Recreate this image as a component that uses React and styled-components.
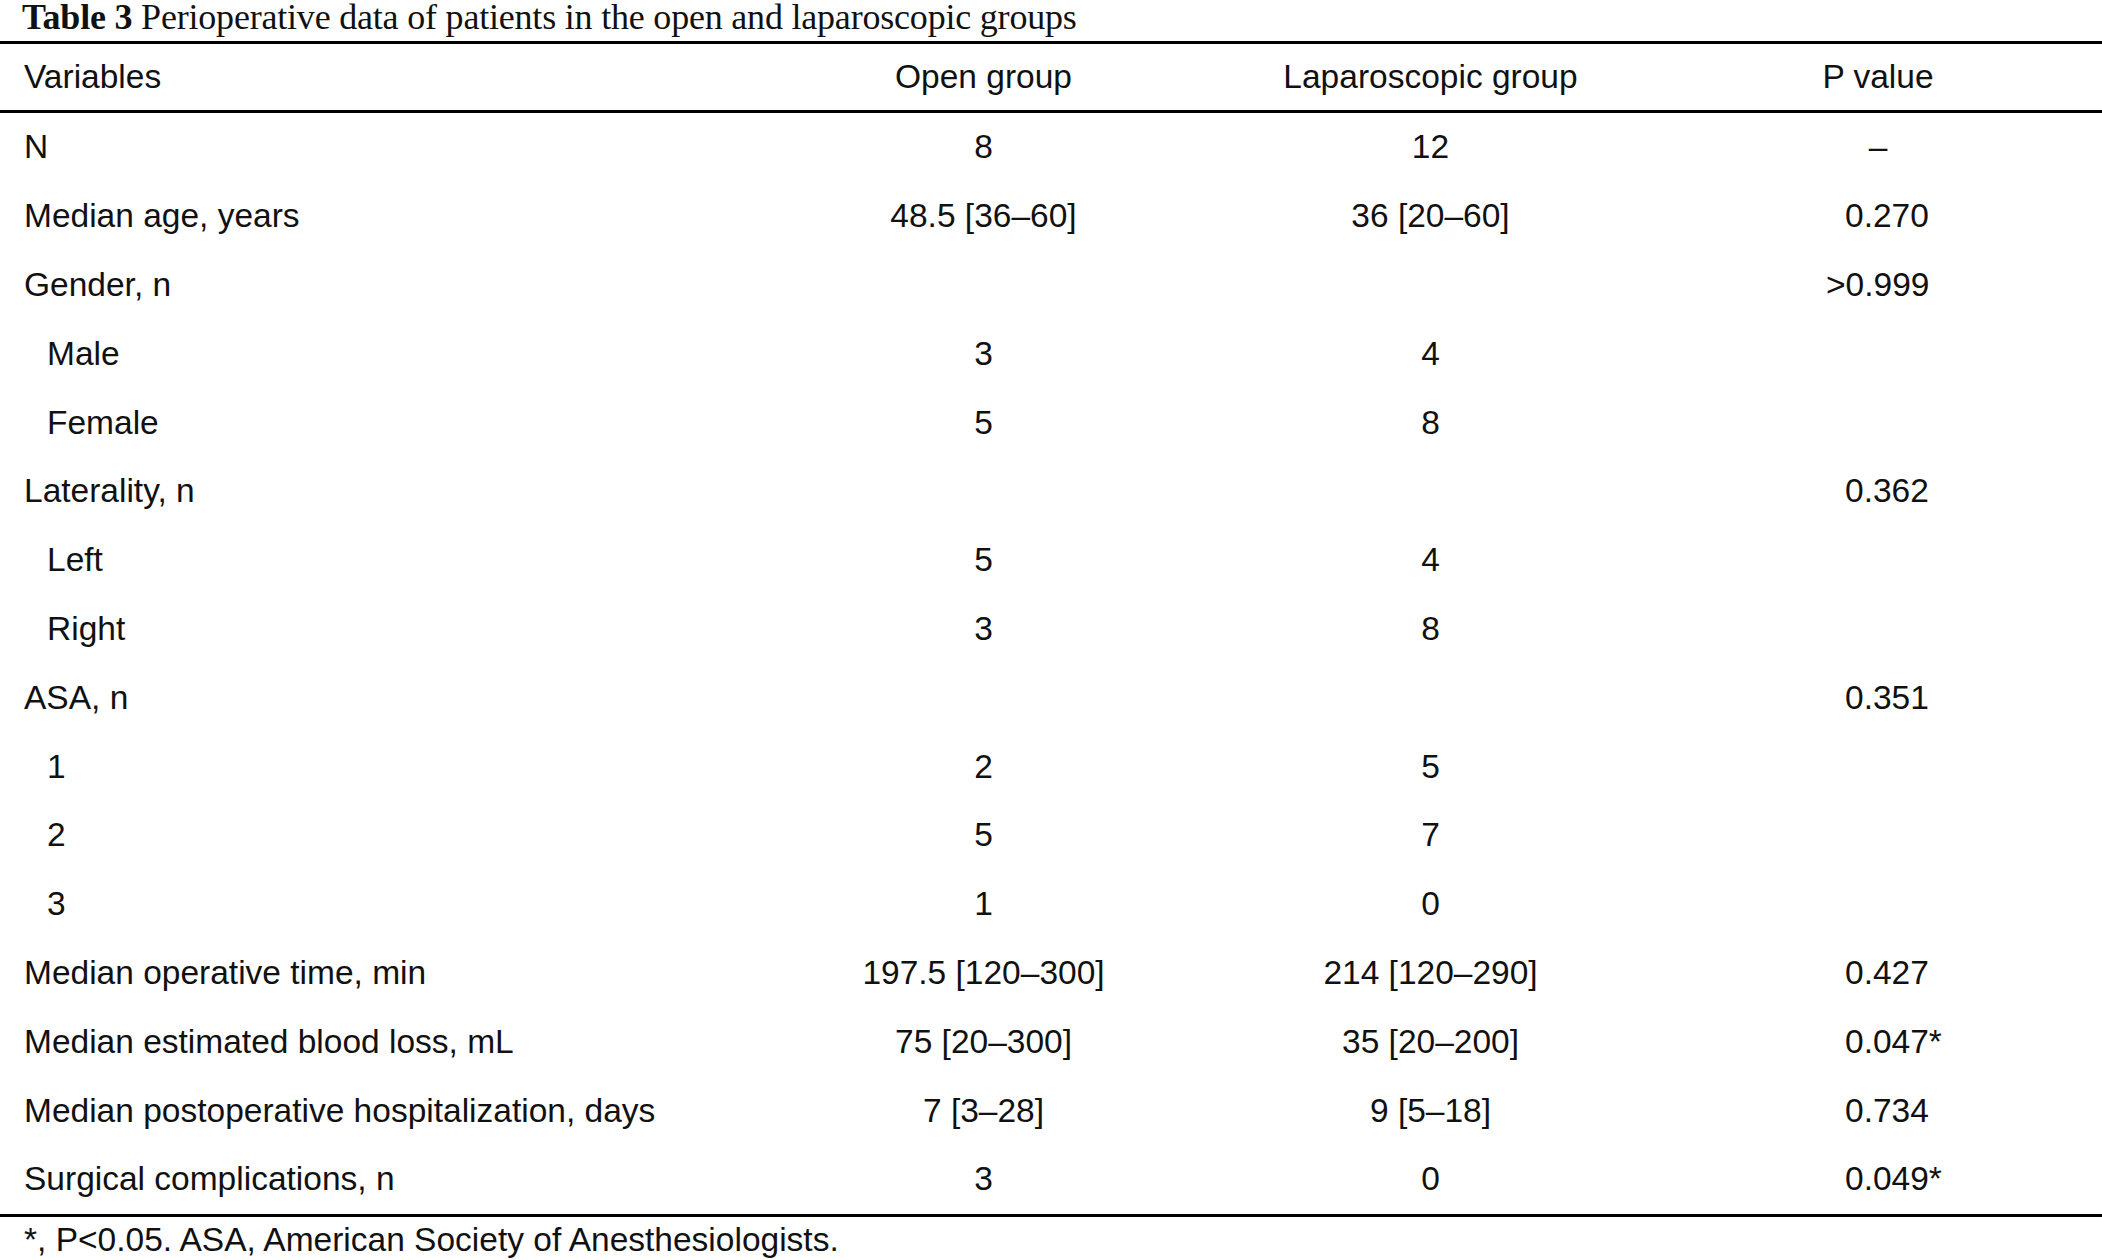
import styled, { createGlobalStyle } from "styled-components";

const GlobalStyle = createGlobalStyle`
    html, body {
        margin: 0;
        padding: 0;
        background: #fff;
    }
    body {
        width: 2102px;
        height: 1260px;
        overflow: hidden;
        color: #111;
        font-family: "Liberation Sans", Arial, sans-serif;
    }
`

const rows = [
    { label: "N", open: "8", lap: "12", p: "–", pCenter: true },
    { label: "Median age, years", open: "48.5 [36–60]", lap: "36 [20–60]", p: "0.270" },
    { label: "Gender, n", open: "", lap: "", p: ">0.999", hang: true },
    { label: "Male", sub: true, open: "3", lap: "4" },
    { label: "Female", sub: true, open: "5", lap: "8" },
    { label: "Laterality, n", open: "", lap: "", p: "0.362" },
    { label: "Left", sub: true, open: "5", lap: "4" },
    { label: "Right", sub: true, open: "3", lap: "8" },
    { label: "ASA, n", open: "", lap: "", p: "0.351" },
    { label: "1", sub: true, open: "2", lap: "5" },
    { label: "2", sub: true, open: "5", lap: "7" },
    { label: "3", sub: true, open: "1", lap: "0" },
    { label: "Median operative time, min", open: "197.5 [120–300]", lap: "214 [120–290]", p: "0.427" },
    { label: "Median estimated blood loss, mL", open: "75 [20–300]", lap: "35 [20–200]", p: "0.047*" },
    { label: "Median postoperative hospitalization, days", open: "7 [3–28]", lap: "9 [5–18]", p: "0.734" },
    { label: "Surgical complications, n", open: "3", lap: "0", p: "0.049*" },
]

const App = () => {
    return (
        <>
            <GlobalStyle />
            <Page>
                <Caption>
                    <b>Table 3</b> Perioperative data of patients in the open and laparoscopic groups
                </Caption>
                <Table>
                    <HeadRow>
                        <LabelCell>Variables</LabelCell>
                        <ValueCell>Open group</ValueCell>
                        <ValueCell>Laparoscopic group</ValueCell>
                        <ValueCell>P value</ValueCell>
                    </HeadRow>
                    <Body>
                        {rows.map((r, i) => (
                            <Row key={i}>
                                <LabelCell $sub={r.sub}>{r.label}</LabelCell>
                                <ValueCell>{r.open}</ValueCell>
                                <ValueCell>{r.lap}</ValueCell>
                                <PCell $center={r.pCenter} $hang={r.hang}>{r.p || ""}</PCell>
                            </Row>
                        ))}
                    </Body>
                </Table>
                <Footnote>*, P&lt;0.05. ASA, American Society of Anesthesiologists.</Footnote>
            </Page>
        </>
    )
}

const Page = styled.div`
    width: 2102px;
    display: flex;
    flex-direction: column;
`

const Caption = styled.div`
    height: 41px;
    padding-left: 22px;
    font-family: "Liberation Serif", "Times New Roman", serif;
    font-size: 36px;
    line-height: 34px;
    letter-spacing: -0.2px;
    color: #111;
    white-space: nowrap;

    b{
        font-weight: bold;
    }
`

const Table = styled.div`
    border-top: 3px solid #000;
    border-bottom: 3px solid #000;
`

const gridCols = `
    display: grid;
    grid-template-columns: 760px 447px 447px 1fr;
    align-items: center;
    font-size: 33.5px;
`

const HeadRow = styled.div`
    ${gridCols}
    height: 66px;
    border-bottom: 3px solid #000;
`

const Body = styled.div`
    display: flex;
    flex-direction: column;
`

const Row = styled.div`
    ${gridCols}
    height: 68.8px;
`

const LabelCell = styled.div`
    padding-left: ${props => props.$sub ? "47px" : "24px"};
    white-space: nowrap;
`

const ValueCell = styled.div`
    text-align: center;
    white-space: nowrap;
`

const PCell = styled.div`
    white-space: nowrap;
    text-align: ${props => props.$center ? "center" : "left"};
    padding-left: ${props => props.$center ? "0" : props.$hang ? "172px" : "191px"};
`

const Footnote = styled.div`
    padding-left: 24px;
    height: 47px;
    display: flex;
    align-items: center;
    font-size: 33.5px;
    white-space: nowrap;
`

export default App
